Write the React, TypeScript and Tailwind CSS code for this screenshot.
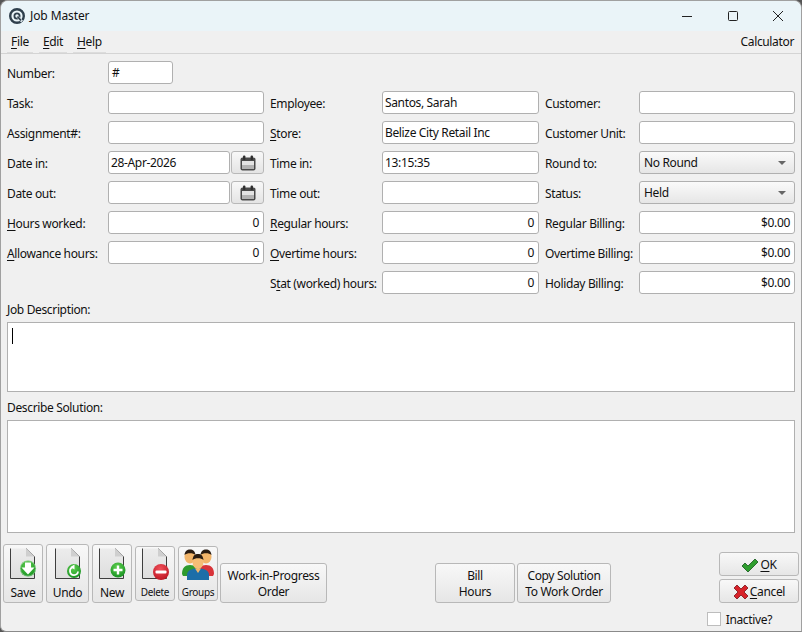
import React from "react";

const Label = ({ text, u, className = "" }: { text: string; u?: number; className?: string }) => (
  <div className={"flex items-center h-[23px] pt-[2px] whitespace-nowrap " + className}>
    {u === undefined ? (
      text
    ) : (
      <span>
        {text.slice(0, u)}
        <span className="underline underline-offset-2">{text[u]}</span>
        {text.slice(u + 1)}
      </span>
    )}
  </div>
);

const Input = ({ value = "", right, className = "" }: { value?: string; right?: boolean; className?: string }) => (
  <div
    className={
      "h-[23px] pt-[1px] bg-white border border-[#b0b0b0] rounded-[3px] flex items-center whitespace-nowrap " +
      (right ? "justify-end pr-[4px] " : "pl-[2px] ") +
      className
    }
  >
    {value}
  </div>
);

const Cal = () => (
  <svg width="16" height="16" viewBox="0 0 16 16">
    <rect x="0.5" y="2.5" width="15" height="13" rx="2" fill="#4a4a4a" />
    <rect x="2" y="6" width="12" height="8" fill="#e4e4e4" />
    <rect x="2" y="10" width="12" height="4" fill="#b4b4b4" />
    <rect x="3" y="0.5" width="2.4" height="4.5" rx="1" fill="#2e2e2e" />
    <rect x="10.6" y="0.5" width="2.4" height="4.5" rx="1" fill="#2e2e2e" />
  </svg>
);

const DateField = ({ value = "" }: { value?: string }) => (
  <div className="flex gap-[1px]">
    <Input value={value} className="w-[122px]" />
    <div className="w-[33px] h-[23px] rounded-[3px] border border-[#b8b8b8] bg-gradient-to-b from-[#f8f8f8] to-[#e4e4e4] flex items-center justify-center">
      <Cal />
    </div>
  </div>
);

const Select = ({ value }: { value: string }) => (
  <div className="h-[23px] pt-[1px] border border-[#b0b0b0] rounded-[3px] bg-gradient-to-b from-[#fafafa] to-[#e6e6e6] flex items-center justify-between pl-[4px] pr-[8px]">
    <span>{value}</span>
    <span className="w-0 h-0 border-l-[4px] border-r-[4px] border-t-[4px] border-l-transparent border-r-transparent border-t-[#666]" />
  </div>
);

const Defs = () => (
  <svg width="0" height="0" className="absolute">
    <defs>
      <linearGradient id="paper" x1="0" y1="0" x2="0" y2="1">
        <stop offset="0" stopColor="#ececec" />
        <stop offset="1" stopColor="#dedede" />
      </linearGradient>
      <radialGradient id="gball" cx="0.45" cy="0.3" r="0.8">
        <stop offset="0" stopColor="#5fcf4f" />
        <stop offset="1" stopColor="#0f8a1c" />
      </radialGradient>
      <radialGradient id="rball" cx="0.45" cy="0.3" r="0.8">
        <stop offset="0" stopColor="#f0505a" />
        <stop offset="1" stopColor="#b80f1c" />
      </radialGradient>
    </defs>
  </svg>
);

const Doc = ({ children }: { children?: React.ReactNode }) => (
  <svg width="26" height="32" viewBox="0 0 26 32" className="overflow-visible">
    <path d="M0.5 0.5H16L24.5 8.5V30.5H0.5Z" fill="url(#paper)" />
    <path d="M0.5 0.5V30.5H24.5V8.5" fill="none" stroke="#2a2a2a" strokeWidth="0.9" />
    <path d="M16 0.5L24.5 8.5" stroke="#444" strokeWidth="0.7" />
    <path d="M16 0.5V8.5H24.5Z" fill="#cfcfcf" />
    {children}
  </svg>
);

const Tool = ({ label, icon, small, className = "" }: { label: string; icon: React.ReactNode; small?: boolean; className?: string }) => (
  <div
    className={
      "rounded-[3px] border border-[#b8b8b8] bg-gradient-to-b from-[#f8f8f8] to-[#e6e6e6] flex flex-col items-center " +
      className
    }
  >
    {icon}
    <span className={small ? "text-[10px] leading-[13px] mt-auto mb-[1px]" : "mt-auto mb-[2px] leading-[14px]"}>{label}</span>
  </div>
);

const Btn = ({ children, className = "" }: { children: React.ReactNode; className?: string }) => (
  <div
    className={
      "rounded-[3px] border border-[#b8b8b8] bg-gradient-to-b from-[#f8f8f8] to-[#e6e6e6] flex flex-col items-center justify-center pt-[2px] text-center leading-[16px] " +
      className
    }
  >
    {children}
  </div>
);

const People = () => (
  <svg width="32" height="31" viewBox="0 0 32 31">
    <path d="M0 25C0 19 3 16 8 16S16 19 16 25V27H1Z" fill="#2e9a2e" />
    <path d="M16 25C16 19 19 16 24 16S32 19 32 25L31 27H16Z" fill="#d8343a" />
    <ellipse cx="8" cy="8" rx="5.5" ry="6.5" fill="#f2b56a" />
    <path d="M2.5 6C3 2 5 0.5 8 0.5S13 2 13.5 6C11 3.5 5 3.5 2.5 6Z" fill="#2a1c12" />
    <ellipse cx="24" cy="8" rx="5.5" ry="6.5" fill="#f2b56a" />
    <path d="M18.5 6C19 2 21 0.5 24 0.5S29 2 29.5 6C27 3.5 21 3.5 18.5 6Z" fill="#2a1c12" />
    <path d="M5 31V26C5 21 10 19.5 16 19.5S27 21 27 26V31Z" fill="#1d6ea8" />
    <path d="M13 19.5L16 24L19 19.5Z" fill="#f2b56a" />
    <ellipse cx="16" cy="13" rx="5.5" ry="7" fill="#f5bd76" />
    <path d="M10.5 11C11 6.5 13 5 16 5S21 6.5 21.5 11C19 8.5 13 8.5 10.5 11Z" fill="#2a1c12" />
  </svg>
);

const MenuItem = ({ c, rest, w }: { c: string; rest: string; w: string }) => (
  <span className={"h-[21px] pl-[4px] flex items-center border-b border-[#dcdcdc] " + w}>
    <span>
      <span className="underline underline-offset-2">{c}</span>
      {rest}
    </span>
  </span>
);

export default function App() {
  return (
    <div className="w-[802px] h-[632px] bg-[#555] overflow-hidden">
      <Defs />
      <div className="w-[802px] h-[632px] rounded-t-lg rounded-bl-[6px] border border-[#a0a0a0] border-b-[#8a8a8a] bg-[#f0f0f0] text-[12px] leading-[16px] tracking-[-0.35px] text-[#111] font-['Noto_Sans',sans-serif] overflow-hidden flex flex-col">
        {/* title bar */}
        <div className="h-[30px] shrink-0 bg-[#eaf4f8] flex items-center pl-[8px]">
          <svg width="16" height="16" viewBox="0 0 16 16">
            <circle cx="8" cy="8" r="6.8" fill="none" stroke="#2f3f4c" strokeWidth="2.4" />
            <circle cx="8" cy="8" r="2.6" fill="none" stroke="#2f3f4c" strokeWidth="1.8" />
            <path d="M8.5 8.5L13 13.5" stroke="#eaf4f8" strokeWidth="2.6" />
            <path d="M8.5 8.5L12 12.5" stroke="#2f3f4c" strokeWidth="1.8" />
          </svg>
          <span className="ml-[5px] tracking-[-0.1px]">Job Master</span>
          <div className="ml-auto flex items-center text-[#222]">
            <svg width="10" height="10" viewBox="0 0 10 10" className="mr-[36px]">
              <path d="M0 5.5H10" stroke="#222" />
            </svg>
            <svg width="10" height="10" viewBox="0 0 10 10" className="mr-[35px]">
              <rect x="0.5" y="0.5" width="9" height="9" rx="1" fill="none" stroke="#222" />
            </svg>
            <svg width="10" height="10" viewBox="0 0 10 10" className="mr-[18px]">
              <path d="M0 0L10 10M10 0L0 10" stroke="#222" />
            </svg>
          </div>
        </div>
        {/* menu */}
        <div className="h-[23px] shrink-0 border-b border-[#d4d4d4] flex items-center pl-[6px] pr-[7px] gap-[6px]">
          <MenuItem c="F" rest="ile" w="w-[26px]" />
          <MenuItem c="E" rest="dit" w="w-[28px]" />
          <MenuItem c="H" rest="elp" w="w-[33px]" />
          <span className="ml-auto">Calculator</span>
        </div>
        {/* form */}
        <div className="pl-[6px] pr-[6px] pt-[7px] grid grid-cols-[101px_156px_118px_157px_100px_156px] gap-y-[7px]">
          <Label text="Number:" />
          <Input value="#" className="w-[65px] pl-[3px]" />
          <div className="col-span-4" />

          <Label text="Task:" />
          <Input />
          <Label text="Employee:" className="pl-[6px]" />
          <Input value="Santos, Sarah" />
          <Label text="Customer:" className="pl-[6px]" />
          <Input />

          <Label text="Assignment#:" />
          <Input />
          <Label text="Store:" u={0} className="pl-[6px]" />
          <Input value="Belize City Retail Inc" />
          <Label text="Customer Unit:" className="pl-[6px]" />
          <Input />

          <Label text="Date in:" />
          <DateField value="28-Apr-2026" />
          <Label text="Time in:" className="pl-[6px]" />
          <Input value="13:15:35" />
          <Label text="Round to:" className="pl-[6px]" />
          <Select value="No Round" />

          <Label text="Date out:" />
          <DateField />
          <Label text="Time out:" className="pl-[6px]" />
          <Input />
          <Label text="Status:" className="pl-[6px]" />
          <Select value="Held" />

          <Label text="Hours worked:" u={0} />
          <Input value="0" right />
          <Label text="Regular hours:" u={0} className="pl-[6px]" />
          <Input value="0" right />
          <Label text="Regular Billing:" className="pl-[6px]" />
          <Input value="$0.00" right />

          <Label text="Allowance hours:" u={0} />
          <Input value="0" right />
          <Label text="Overtime hours:" u={0} className="pl-[6px]" />
          <Input value="0" right />
          <Label text="Overtime Billing:" className="pl-[6px]" />
          <Input value="$0.00" right />

          <div className="col-span-2" />
          <Label text="Stat (worked) hours:" u={1} className="pl-[6px]" />
          <Input value="0" right />
          <Label text="Holiday Billing:" className="pl-[6px]" />
          <Input value="$0.00" right />
        </div>
        {/* text areas */}
        <div className="px-[6px] flex flex-col">
          <div className="mt-[8px] h-[16px] leading-[16px]">Job Description:</div>
          <div className="mt-[4px] h-[70px] w-[788px] bg-white border border-[#b0b0b0] pl-[4px] pt-[5px]">
            <div className="w-[1px] h-[16px] bg-black" />
          </div>
          <div className="mt-[8px] h-[16px] leading-[16px]">Describe Solution:</div>
          <div className="mt-[4px] h-[113px] w-[788px] bg-white border border-[#b0b0b0]" />
        </div>
        {/* buttons */}
        <div className="mt-[11px] pl-[2px] pr-[2px] flex items-end h-[59px]">
          <div className="flex items-end gap-[3px]">
            <Tool
              className="w-[40px] h-[59px] pt-[3px]"
              label="Save"
              icon={
                <Doc>
                  <circle cx="18" cy="20.5" r="8" fill="url(#gball)" />
                  <circle cx="18" cy="20.5" r="7.6" fill="none" stroke="#fff" strokeOpacity="0.5" strokeWidth="0.7" />
                  <path d="M15 14.5H21V19.5H24.5L18 26.5L11.5 19.5H15Z" fill="#fff" />
                </Doc>
              }
            />
            <Tool
              className="w-[43px] h-[59px] pt-[3px]"
              label="Undo"
              icon={
                <Doc>
                  <circle cx="19" cy="23" r="7" fill="url(#gball)" />
                  <path d="M23 23.5A4 4 0 1 1 18 19.2" stroke="#fff" strokeWidth="1.8" fill="none" />
                  <path d="M15.5 19L19.5 16.5V21.5Z" fill="#fff" />
                </Doc>
              }
            />
            <Tool
              className="w-[40px] h-[59px] pt-[3px]"
              label="New"
              icon={
                <Doc>
                  <circle cx="19" cy="22" r="7.5" fill="url(#gball)" />
                  <path d="M19 17.5V26.5M14.5 22H23.5" stroke="#fff" strokeWidth="2.4" />
                </Doc>
              }
            />
            <Tool
              small
              className="w-[40px] h-[55px] pt-[1px] mb-[2px]"
              label="Delete"
              icon={
                <Doc>
                  <circle cx="19" cy="24" r="8" fill="url(#rball)" />
                  <rect x="13.5" y="22.5" width="11" height="3" rx="1" fill="#fff" />
                </Doc>
              }
            />
            <Tool small className="w-[40px] h-[55px] pt-[2px] mb-[2px]" label="Groups" icon={<People />} />
          </div>
          <Btn className="w-[107px] h-[40px] ml-[2px]">
            <span>Work-in-Progress</span>
            <span>Order</span>
          </Btn>
          <Btn className="w-[80px] h-[40px] ml-[108px]">
            <span>Bill</span>
            <span>Hours</span>
          </Btn>
          <Btn className="w-[94px] h-[40px] ml-[2px]">
            <span>Copy Solution</span>
            <span>To Work Order</span>
          </Btn>
          <div className="ml-auto flex flex-col gap-[3px]">
            <Btn className="w-[80px] h-[24px]">
              <span className="flex items-center gap-[1px]">
                <svg width="18" height="15" viewBox="0 0 18 15">
                  <path d="M1 8L4 5L7 8L14 1L17 4L7 14Z" fill="#2f9e2f" stroke="#14551a" strokeWidth="0.8" />
                </svg>
                <span><span className="underline underline-offset-2">O</span>K</span>
              </span>
            </Btn>
            <Btn className="w-[80px] h-[24px]">
              <span className="flex items-center gap-[1px]">
                <svg width="16" height="16" viewBox="0 0 16 16">
                  <path d="M1 4L4 1L8 5L12 1L15 4L11 8L15 12L12 15L8 11L4 15L1 12L5 8Z" fill="#d8232a" stroke="#7b1218" strokeWidth="0.8" />
                </svg>
                <span><span className="underline underline-offset-2">C</span>ancel</span>
              </span>
            </Btn>
          </div>
        </div>
        {/* inactive */}
        <div className="mt-[7px] flex items-center justify-end pr-[29px]">
          <div className="w-[14px] h-[14px] bg-white border border-[#bdbdbd] mr-[5px]" />
          <span className="pt-[2px]">Inactive?</span>
        </div>
      </div>
    </div>
  );
}
